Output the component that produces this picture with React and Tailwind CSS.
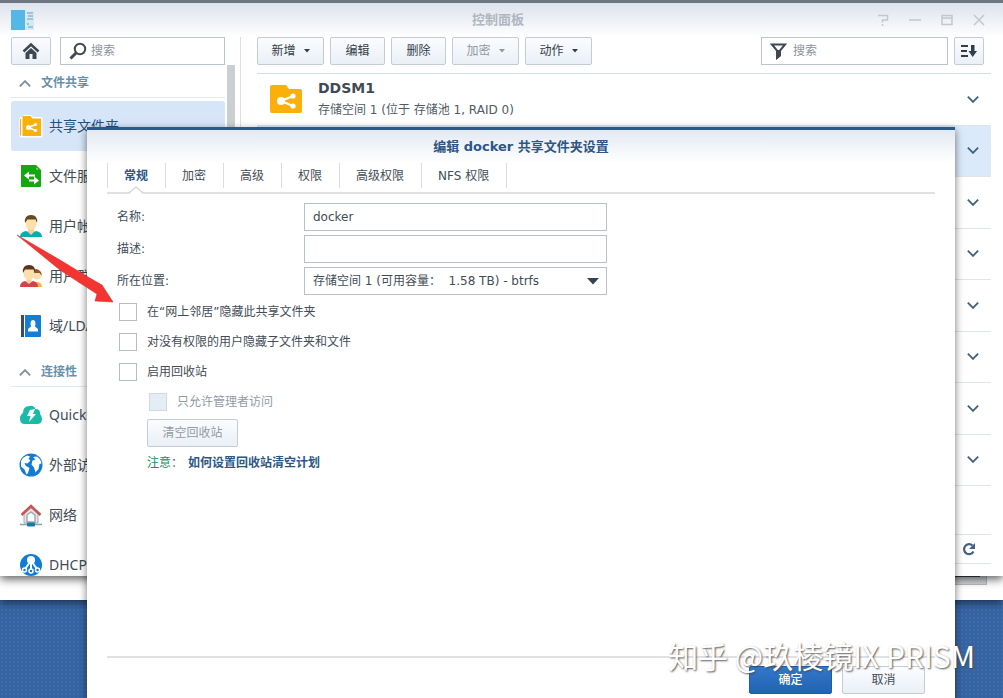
import { useId } from "react";

const buttonBase =
  "flex h-7 items-center justify-center gap-2 rounded-[2px] border border-[#c3ccd6] bg-linear-to-b from-[#fbfcfe] to-[#eaf0f7] text-xs";

function Chevron({ up = false, className }) {
  return (
    <svg viewBox="0 0 14 8" className={className} fill="none" stroke="currentColor" strokeWidth="2.2" aria-hidden="true">
      <path d={up ? "M1 7.300 7 1.300 13 7.300" : "M1 .7 7 6.700 13 .7"} />
    </svg>
  );
}

function SharedFolderIcon({ className }) {
  return (
    <svg viewBox="0 0 32 30" className={className} aria-hidden="true">
      <path d="M2 1h14l3 4h11a2 2 0 0 1 2 2v20a2 2 0 0 1-2 2H2a2 2 0 0 1-2-2V3a2 2 0 0 1 2-2Z" fill="#fbb009" />
      <path d="M11 17 23 12M11 17l12 5" stroke="#fff" strokeWidth="2" />
      <circle cx="11" cy="17" r="4" fill="#fff" />
      <circle cx="23" cy="12" r="2.6" fill="#fff" />
      <circle cx="23" cy="22" r="2.6" fill="#fff" />
    </svg>
  );
}

function SidebarShareIcon() {
  return (
    <svg viewBox="0 0 24 24" className="size-6" aria-hidden="true">
      <path d="M3 3 5 1h7l2 2h8q1.500 0 1.500 1.500V22q0 1.500-1.500 1.500H2Q.5 23.500.5 22V5Q.5 3 3 3Z" fill="#fff" />
      <path d="M4.500 2h7l2 2.500H22V22H3.500V3Q3.500 2 4.500 2Z" fill="#fbb009" />
      <path d="M1.500 5v16.500" stroke="#fbb009" />
      <path d="m9.500 13.500 7-3m-7 3 7 3" stroke="#fff" strokeWidth="1.500" />
      <circle cx="9.500" cy="13.500" r="2.500" fill="#fff" />
      <circle cx="16.500" cy="10.500" r="1.600" fill="#fff" />
      <circle cx="16.500" cy="16.500" r="1.600" fill="#fff" />
    </svg>
  );
}

function FileServiceIcon() {
  return (
    <svg viewBox="0 0 24 24" className="size-6" aria-hidden="true">
      <path d="M2 1h15l5 5v16q0 1-1 1H3q-1 0-1-1Z" fill="#16a60f" />
      <path d="M17.500 3.500 19.500 5.500h-2Z" fill="#d8f3d5" />
      <path d="M5 11.500 10 7.500v3h6v2h-6v3ZM20 16.500l-5-4v3H10v2h5v3Z" fill="#fff" />
    </svg>
  );
}

function UserIcon() {
  return (
    <svg viewBox="0 0 24 24" className="size-6" aria-hidden="true">
      <path d="M1 23q0-5 6-6l5 2 5-2q6 1 6 6Z" fill="#08adaf" />
      <path d="M9 14h6v4l-3 3-3-3Z" fill="#f4cf99" />
      <ellipse cx="12" cy="9.500" rx="5.500" ry="6.500" fill="#fddfad" />
      <path d="M6 9Q5 1 12 1t6 8l-1.500-3.500H8.500Z" fill="#6a4724" />
    </svg>
  );
}

function GroupIcon() {
  return (
    <svg viewBox="0 0 24 24" className="size-6" aria-hidden="true">
      <path d="M13 23v-5h6q4 1 4 5Z" fill="#f4b346" />
      <circle cx="18" cy="11" r="4.500" fill="#fddfad" />
      <path d="M13 8q4-6 9 0l1 4-2.500-3h-6Z" fill="#965724" />
      <path d="M1 23q0-5 5-6l4 2 4-2q5 1 5 6Z" fill="#d84149" />
      <path d="M7.500 14h5v4L10 20l-2.500-2Z" fill="#f4cf99" />
      <ellipse cx="10" cy="9.500" rx="5.500" ry="6.500" fill="#fddfad" />
      <path d="M4 9Q3 1 10 1t6 8l-1.500-3.500H6Z" fill="#5b351d" />
    </svg>
  );
}

function DirectoryIcon() {
  return (
    <svg viewBox="0 0 24 24" className="size-6" aria-hidden="true">
      <path d="M2 1h3v22H2Z" fill="#3e4d5c" />
      <path d="M6 1h15q1 0 1 1v20q0 1-1 1H6Z" fill="#117fd6" />
      <path d="M12 12.500Q10.500 6 14 6t2 6.500l3 2.500v2.500H9V15Z" fill="#fff" />
    </svg>
  );
}

function QuickConnectIcon() {
  return (
    <svg viewBox="0 0 24 24" className="size-6" aria-hidden="true">
      <path d="M6 21q-5 0-5-5.500Q1 12 4 10 4 3 10.500 3q4-1 6 3 5 0 4.500 5 2 2 2 5 0 5-5 5Z" fill="#1bb9a7" />
      <path d="m11 7 5-1-2 5h3l-7 8 1.500-6H8Z" fill="#fff" />
    </svg>
  );
}

function GlobeIcon() {
  return (
    <svg viewBox="0 0 24 24" className="size-6" aria-hidden="true">
      <circle cx="12" cy="12" r="11.500" fill="#117bd5" />
      <path d="M2 8q2-4 6-5.500l3 1-1.500 2.500 2 1.500-3 3-3-.5 1 2.500 4 2.500-1.500 5-1.500 1.500-2-5-3.500-3ZM14 4l4-.5q4 3 4.500 7l-2 .5-1 5-3 3.500-1.500-5-2.500-3 1-4 3-1Z" fill="#fff" />
    </svg>
  );
}

function NetworkIcon() {
  return (
    <svg viewBox="0 0 24 24" className="size-6" aria-hidden="true">
      <path d="M5 11 12 5l7 6v9H5Z" fill="#e2e7ea" stroke="#a1aaaf" />
      <path d="M8 19v-7l4-3 4 3v7Z" fill="#fff" stroke="#a1aaaf" strokeWidth="1.500" />
      <path d="M2.500 12 12 3l9.500 9" fill="none" stroke="#ca5254" strokeWidth="2.500" />
      <path d="M1 21.500h22" stroke="#929da3" strokeWidth="1.500" />
      <rect x="8" y="19.500" width="8" height="4" rx="1" fill="#157ba8" />
    </svg>
  );
}

function DhcpIcon() {
  return (
    <svg viewBox="0 0 24 24" className="size-6" aria-hidden="true">
      <circle cx="12" cy="12" r="11" fill="#117bd5" />
      <path d="M12 9v8M11 9l-5 7M13 9l5 7" stroke="#fff" strokeWidth="2" />
      <circle cx="12" cy="7" r="4" fill="#fff" />
      <circle cx="5.500" cy="17" r="2" fill="#117bd5" stroke="#fff" strokeWidth="1.500" />
      <circle cx="12" cy="18" r="2" fill="#117bd5" stroke="#fff" strokeWidth="1.500" />
      <circle cx="18.500" cy="17" r="2" fill="#117bd5" stroke="#fff" strokeWidth="1.500" />
    </svg>
  );
}

const sections = [
  {
    title: "文件共享",
    items: [
      { label: "共享文件夹", Icon: SidebarShareIcon, active: true },
      { label: "文件服务", Icon: FileServiceIcon },
      { label: "用户帐号", Icon: UserIcon },
      { label: "用户群组", Icon: GroupIcon },
      { label: "域/LDAP", Icon: DirectoryIcon },
    ],
  },
  {
    title: "连接性",
    items: [
      { label: "QuickConnect", Icon: QuickConnectIcon },
      { label: "外部访问", Icon: GlobeIcon },
      { label: "网络", Icon: NetworkIcon },
      { label: "DHCP Server", Icon: DhcpIcon },
    ],
  },
];

function Sidebar() {
  return (
    <aside className="flex w-[230px] shrink-0 flex-col border-r border-[#dadfe4]">
      <div className="flex shrink-0 gap-[9px] pr-[15px]">
        <button type="button" aria-label="Home" className={`${buttonBase} w-10`}>
          <svg viewBox="0 0 18 18" className="size-[18px]" aria-hidden="true">
            <path d="M1.500 9.500 9 2.500l7.500 7" fill="none" stroke="#3c4753" strokeWidth="2.500" />
            <path d="M3.500 11 9 6l5.500 5v6h-4v-5h-3v5h-4Z" fill="#3c4753" />
          </svg>
        </button>
        <label className="flex h-7 min-w-0 flex-1 items-center gap-1 border border-[#bcc4cb] bg-white px-2">
          <svg viewBox="0 0 18 18" className="size-[18px] shrink-0" fill="none" stroke="#3f4850" aria-hidden="true">
            <circle cx="11" cy="7" r="5.200" strokeWidth="2" />
            <path d="m7 11-5.500 5.500" strokeWidth="3" />
          </svg>
          <input type="search" placeholder="搜索" aria-label="搜索" className="min-w-0 flex-1 bg-transparent text-xs outline-none placeholder:text-[#8c939b]" />
        </label>
      </div>
      <div className="flex min-h-0 flex-1 gap-[2px]">
        <nav className="w-[214px] shrink-0 overflow-hidden">
          {sections.map(({ title, items }) => (
            <section key={title} className="pb-[3px]">
              <h2 className="border-b border-[#e2e8ee]">
                <button type="button" className="flex h-8 items-center gap-[10px] px-2 pt-1 text-xs font-bold text-[#6890ad]">
                  <Chevron up className="h-[7px] w-3 text-[#7c8f9e]" />
                  {title}
                </button>
              </h2>
              <ul className="pt-[3px]">
                {items.map(({ label, Icon, active }) => (
                  <li key={label}>
                    <a
                      href="#"
                      className={`flex h-[50px] items-center gap-[6px] rounded-[3px] px-2 text-sm ${active ? "bg-[#d6e6f8] text-[#205280]" : "text-[#414b55]"}`}
                    >
                      <Icon />
                      <span className="whitespace-nowrap font-['Noto_Sans','Noto_Sans_CJK_SC',sans-serif]">{label}</span>
                    </a>
                  </li>
                ))}
              </ul>
            </section>
          ))}
        </nav>
        <div className="h-[240px] w-2 bg-[#cccfd2]" />
      </div>
    </aside>
  );
}

const tools = [
  { label: "新增", menu: true },
  { label: "编辑" },
  { label: "删除" },
  { label: "加密", menu: true, disabled: true },
  { label: "动作", menu: true },
];

function Content() {
  return (
    <main className="flex min-w-0 flex-1 flex-col">
      <div className="flex gap-[6px] pr-[7px]">
        {tools.map(({ label, menu, disabled }) => (
          <button
            key={label}
            type="button"
            disabled={disabled}
            className={`${buttonBase} ${menu ? "w-[67px]" : "w-[55px]"} ${disabled ? "text-[#8f98a3]" : "text-[#333e49]"}`}
          >
            {label}
            {menu && (
              <svg viewBox="0 0 6 4" className="h-1 w-[6px]" aria-hidden="true">
                <path d="M0 0h6L3 3.500Z" fill="currentColor" />
              </svg>
            )}
          </button>
        ))}
        <label className="ml-auto flex h-7 w-[187px] items-center gap-[6px] border border-[#bcc4cb] bg-white px-2">
          <svg viewBox="0 0 17 18" className="h-[18px] w-[17px] shrink-0" aria-hidden="true">
            <path d="M2 2.500h13l-5 6v5l-3 2.500V8.500Z" fill="none" stroke="#3f4850" strokeWidth="2" />
            <path d="M7 8h3v6l-3 3Z" fill="#3f4850" />
          </svg>
          <input type="search" placeholder="搜索" aria-label="搜索" className="min-w-0 flex-1 bg-transparent text-xs outline-none placeholder:text-[#8c939b]" />
        </label>
        <button type="button" aria-label="Sort" className={`${buttonBase} w-[30px]`}>
          <svg viewBox="0 0 18 14" className="h-[14px] w-[18px]" fill="#333e49" aria-hidden="true">
            <path d="M1 1h7v2H1ZM1 6h6v2H1ZM1 11h7v2H1ZM11 1h3.500v6H17l-4.300 6L8.500 7H11Z" />
          </svg>
        </button>
      </div>
      <ul className="mt-2 flex h-[413px] flex-col border-t border-[#d5dbe0]">
        {[0, 1, 2, 3, 4, 5, 6, 7].map((row) => (
          <li
            key={row}
            className={`flex flex-1 items-center border-b border-[#e0e5ea] pr-3 pl-[13px] ${row === 1 ? "bg-[#dbeafa]" : ""}`}
          >
            {row === 0 && (
              <>
                <SharedFolderIcon className="h-[30px] w-8" />
                <div className="ml-4">
                  <h3 className="text-sm leading-[22px] font-bold text-[#414b55]">DDSM1</h3>
                  <p className="text-xs leading-[22px] text-[#505a64]">存储空间 1 (位于 存储池 1, RAID 0)</p>
                </div>
              </>
            )}
            <button type="button" aria-label="Expand" className="ml-auto text-[#3f6280]">
              <Chevron className="h-[7px] w-3" />
            </button>
          </li>
        ))}
      </ul>
      <div className="mt-12 flex h-[30px] items-center justify-end border-y border-[#dfe4e8] pr-[15px]">
        <button type="button" aria-label="Refresh">
          <svg viewBox="0 0 14 14" className="size-[14px]" aria-hidden="true">
            <path d="M11.500 9.500A5 5 0 1 1 10.500 3.500" fill="none" stroke="#416285" strokeWidth="2.200" />
            <path d="M13 1v6H7Z" fill="#416285" />
          </svg>
        </button>
      </div>
    </main>
  );
}

function ControlPanel() {
  return (
    <section className="absolute inset-x-0 top-0 flex h-[576px] flex-col overflow-hidden border-t-[3px] border-[#6d7583] bg-white">
      <header className="grid h-[34px] shrink-0 grid-cols-[1fr_auto_1fr] items-center bg-linear-to-b from-[#dde2ec] to-white pr-[18px] pl-[11px]">
        <svg viewBox="0 0 24 20" className="h-5 w-6" aria-hidden="true">
          <path d="M0 0h14v20H0Z" fill="#55b6e8" />
          <path d="M14 1h9v19h-9Z" fill="#d5e9f3" />
          <path d="M16 3h6M17 6h5M16 9h6M16 14h2M17 17h5" stroke="#729aae" />
        </svg>
        <h1 className="text-[13px] font-bold text-[#b0b7c1]">控制面板</h1>
        <div className="flex items-center justify-end gap-5 text-[#c3c7ce]">
          <button type="button" aria-label="Help">
            <svg viewBox="0 0 12 12" className="size-3" fill="none" stroke="currentColor" strokeWidth="1.500" aria-hidden="true">
              <path d="M1 1.500h9.500v4.500H5.500v2.500M5.500 10v2" />
            </svg>
          </button>
          <button type="button" aria-label="Minimize">
            <svg viewBox="0 0 12 12" className="size-3" stroke="currentColor" strokeWidth="1.500" aria-hidden="true">
              <path d="M0 6h12" />
            </svg>
          </button>
          <button type="button" aria-label="Maximize">
            <svg viewBox="0 0 12 12" className="size-3" fill="none" stroke="currentColor" strokeWidth="1.500" aria-hidden="true">
              <path d="M1 1.500h10v9H1ZM1 4h10" />
            </svg>
          </button>
          <button type="button" aria-label="Close">
            <svg viewBox="0 0 12 12" className="size-3" stroke="currentColor" strokeWidth="1.500" aria-hidden="true">
              <path d="m1 1 10 10M11 1 1 11" />
            </svg>
          </button>
        </div>
      </header>
      <div className="flex min-h-0 flex-1 gap-4 pr-3 pl-[11px]">
        <Sidebar />
        <Content />
      </div>
    </section>
  );
}

const tabs = ["常规", "加密", "高级", "权限", "高级权限", "NFS 权限"];

function CheckRow({ label, disabled = false }) {
  const id = useId();
  return (
    <div className={`flex h-[30px] items-center gap-[10px] ${disabled ? "pl-8 text-[#929ba5]" : "pl-[2px]"}`}>
      <input
        id={id}
        type="checkbox"
        disabled={disabled}
        className="size-[18px] appearance-none border border-[#b5bcc3] bg-white checked:bg-[#2d72c4] disabled:border-[#cfdae4] disabled:bg-[#e4edf6]"
      />
      <label htmlFor={id}>{label}</label>
    </div>
  );
}

function SettingsDialog() {
  return (
    <section
      role="dialog"
      aria-labelledby="dialog-title"
      className="absolute top-[127px] right-12 bottom-0 left-[87px] flex flex-col border-t-[3px] border-[#2c5987] bg-white text-xs text-[#424c56] shadow-[0_3px_8px_rgba(0,0,0,0.55)]"
    >
      <header className="bg-linear-to-b from-[#e3e9f2] to-white">
        <h2 id="dialog-title" className="text-center text-[13px] leading-[33px] font-bold text-[#2c5685]">
          编辑 docker 共享文件夹设置
        </h2>
      </header>
      <div role="tablist" className="mx-5 flex h-[31px] border-b-2 border-[#dfe1e4]">
        {tabs.map((tab, i) => (
          <button
            key={tab}
            type="button"
            role="tab"
            aria-selected={i === 0}
            className={`relative h-[25px] border-l border-[#d9dde1] pr-[17px] pl-4 last:border-r ${i === 0 ? "font-bold text-[#2c5685]" : ""}`}
          >
            {tab}
            {i === 0 && (
              <svg viewBox="0 0 16 8" className="absolute -bottom-[6px] left-5 h-2 w-4" aria-hidden="true">
                <path d="M1 8 8 1l7 7Z" fill="#fff" />
                <path d="M1 7 8 1l7 6" fill="none" stroke="#d5d8dc" strokeWidth="1.500" />
              </svg>
            )}
          </button>
        ))}
      </div>
      <form className="flex min-h-0 flex-1 flex-col">
        <div className="grid grid-cols-[187px_303px] items-center gap-y-1 pt-[9px] pl-[30px]">
          <label htmlFor="name">名称:</label>
          <input id="name" defaultValue="docker" className="h-7 border border-[#b9c1c8] bg-white px-2 outline-none" />
          <label htmlFor="description">描述:</label>
          <input id="description" className="h-7 border border-[#b9c1c8] bg-white px-2 outline-none" />
          <label htmlFor="location">所在位置:</label>
          <div className="grid">
            <select id="location" className="col-start-1 row-start-1 h-7 appearance-none border border-[#b9c1c8] bg-white px-2 outline-none">
              <option>{"存储空间 1 (可用容量：\u00a0\u00a01.58 TB) - btrfs"}</option>
            </select>
            <svg viewBox="0 0 12 7" className="pointer-events-none col-start-1 row-start-1 mr-2 h-[7px] w-3 self-center justify-self-end" aria-hidden="true">
              <path d="M0 0h12L6 6.500Z" fill="#39434d" />
            </svg>
          </div>
        </div>
        <div className="flex flex-col items-start pt-[2px] pl-[30px]">
          <CheckRow label="在“网上邻居”隐藏此共享文件夹" />
          <CheckRow label="对没有权限的用户隐藏子文件夹和文件" />
          <CheckRow label="启用回收站" />
          <CheckRow label="只允许管理者访问" disabled />
          <div className="flex flex-col items-start gap-1 pt-[2px] pl-[30px]">
            <button type="button" disabled className={`${buttonBase} w-[91px] text-[#929ba5]`}>
              清空回收站
            </button>
            <p className="flex gap-[5px] leading-6">
              <span className="text-[#1d8a64]">注意：</span>
              <a href="#" className="font-bold text-[#2c5685]">
                如何设置回收站清空计划
              </a>
            </p>
          </div>
        </div>
        <footer className="mx-5 mt-auto flex justify-end gap-[10px] border-t-2 border-[#dfe1e4] px-[10px] pt-2 pb-1">
          <button type="submit" className="h-7 w-[83px] rounded-[2px] border border-[#205da9] bg-linear-to-b from-[#3378c8] to-[#2263b2] font-medium text-white">
            确定
          </button>
          <button type="button" className={`${buttonBase} w-[83px]`}>
            取消
          </button>
        </footer>
      </form>
    </section>
  );
}

export default function App() {
  return (
    <div className="relative h-screen overflow-hidden bg-[#3664a3] bg-[radial-gradient(#3f6ca9_1px,transparent_1px)] bg-[size:4px_4px] font-['DejaVu_Sans','Noto_Sans_CJK_SC',sans-serif]">
      <div className="absolute inset-x-0 top-0 flex h-[600px] flex-col justify-end overflow-hidden bg-white shadow-[0_3px_8px_rgba(0,0,0,0.5)]">
        <div className="mr-4 mb-[15px] ml-[87px] h-3 border border-[#b9bbbd] bg-[#d5d7d9]" />
        <div className="absolute inset-x-0 top-0 h-[576px] shadow-[0_3px_9px_rgba(0,0,0,0.65)]" />
        <div className="absolute top-[576px] right-[23px] left-[87px] h-px bg-[#22262b]" />
      </div>
      <ControlPanel />
      <SettingsDialog />
      <svg viewBox="0 0 100 72" className="pointer-events-none absolute top-[233px] left-[15px] h-[72px] w-[100px]" aria-hidden="true">
        <path d="M2 2 45 27 73 44l14 8 11 17-18-1 2-7-37-24Z" fill="#f33532" stroke="#d52e32" strokeWidth=".6" />
      </svg>
      <p className="pointer-events-none absolute right-[28px] bottom-[28px] font-['Noto_Sans_CJK_SC',sans-serif] text-[30px] leading-[30px] whitespace-nowrap text-white [text-shadow:1px_1px_2px_rgba(70,70,70,0.9)]">
        知乎 @玖棱镜IX PRISM
      </p>
    </div>
  );
}
